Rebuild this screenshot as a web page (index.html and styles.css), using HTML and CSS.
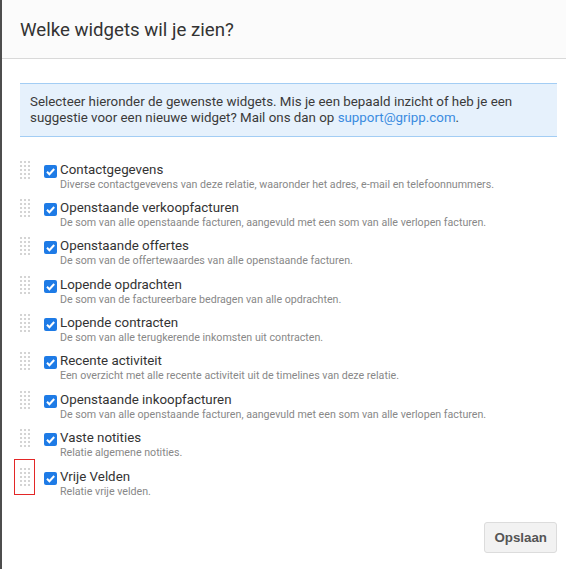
FILE: index.html
```html
<!DOCTYPE html>
<html lang="nl">
<head>
<meta charset="utf-8">
<link rel="stylesheet" href="styles.css">
</head>
<body>
<div class="dialog">
  <div class="header"><h1 class="title">Welke widgets wil je zien?</h1></div>
  <div class="info">Selecteer hieronder de gewenste widgets. Mis je een bepaald inzicht of heb je een suggestie voor een nieuwe widget? Mail ons dan op <a class="link" href="#">support@gripp.com</a>.</div>
  <ul class="list">
    <li class="row"><span class="handle"><i></i><i></i><i></i><i></i><i></i><i></i><i></i><i></i><i></i><i></i><i></i><i></i><i></i><i></i><i></i></span><span class="cb"><svg viewBox="0 0 13 13" width="13" height="13"><path d="M3 6.8 L5.4 9.2 L10.2 4" fill="none" stroke="#fff" stroke-width="2"/></svg></span><div class="text"><div class="name">Contactgegevens</div><div class="desc">Diverse contactgevevens van deze relatie, waaronder het adres, e-mail en telefoonnummers.</div></div></li>
    <li class="row"><span class="handle"><i></i><i></i><i></i><i></i><i></i><i></i><i></i><i></i><i></i><i></i><i></i><i></i><i></i><i></i><i></i></span><span class="cb"><svg viewBox="0 0 13 13" width="13" height="13"><path d="M3 6.8 L5.4 9.2 L10.2 4" fill="none" stroke="#fff" stroke-width="2"/></svg></span><div class="text"><div class="name">Openstaande verkoopfacturen</div><div class="desc">De som van alle openstaande facturen, aangevuld met een som van alle verlopen facturen.</div></div></li>
    <li class="row"><span class="handle"><i></i><i></i><i></i><i></i><i></i><i></i><i></i><i></i><i></i><i></i><i></i><i></i><i></i><i></i><i></i></span><span class="cb"><svg viewBox="0 0 13 13" width="13" height="13"><path d="M3 6.8 L5.4 9.2 L10.2 4" fill="none" stroke="#fff" stroke-width="2"/></svg></span><div class="text"><div class="name">Openstaande offertes</div><div class="desc">De som van de offertewaardes van alle openstaande facturen.</div></div></li>
    <li class="row"><span class="handle"><i></i><i></i><i></i><i></i><i></i><i></i><i></i><i></i><i></i><i></i><i></i><i></i><i></i><i></i><i></i></span><span class="cb"><svg viewBox="0 0 13 13" width="13" height="13"><path d="M3 6.8 L5.4 9.2 L10.2 4" fill="none" stroke="#fff" stroke-width="2"/></svg></span><div class="text"><div class="name">Lopende opdrachten</div><div class="desc">De som van de factureerbare bedragen van alle opdrachten.</div></div></li>
    <li class="row"><span class="handle"><i></i><i></i><i></i><i></i><i></i><i></i><i></i><i></i><i></i><i></i><i></i><i></i><i></i><i></i><i></i></span><span class="cb"><svg viewBox="0 0 13 13" width="13" height="13"><path d="M3 6.8 L5.4 9.2 L10.2 4" fill="none" stroke="#fff" stroke-width="2"/></svg></span><div class="text"><div class="name">Lopende contracten</div><div class="desc">De som van alle terugkerende inkomsten uit contracten.</div></div></li>
    <li class="row"><span class="handle"><i></i><i></i><i></i><i></i><i></i><i></i><i></i><i></i><i></i><i></i><i></i><i></i><i></i><i></i><i></i></span><span class="cb"><svg viewBox="0 0 13 13" width="13" height="13"><path d="M3 6.8 L5.4 9.2 L10.2 4" fill="none" stroke="#fff" stroke-width="2"/></svg></span><div class="text"><div class="name">Recente activiteit</div><div class="desc">Een overzicht met alle recente activiteit uit de timelines van deze relatie.</div></div></li>
    <li class="row"><span class="handle"><i></i><i></i><i></i><i></i><i></i><i></i><i></i><i></i><i></i><i></i><i></i><i></i><i></i><i></i><i></i></span><span class="cb"><svg viewBox="0 0 13 13" width="13" height="13"><path d="M3 6.8 L5.4 9.2 L10.2 4" fill="none" stroke="#fff" stroke-width="2"/></svg></span><div class="text"><div class="name">Openstaande inkoopfacturen</div><div class="desc">De som van alle openstaande facturen, aangevuld met een som van alle verlopen facturen.</div></div></li>
    <li class="row"><span class="handle"><i></i><i></i><i></i><i></i><i></i><i></i><i></i><i></i><i></i><i></i><i></i><i></i><i></i><i></i><i></i></span><span class="cb"><svg viewBox="0 0 13 13" width="13" height="13"><path d="M3 6.8 L5.4 9.2 L10.2 4" fill="none" stroke="#fff" stroke-width="2"/></svg></span><div class="text"><div class="name">Vaste notities</div><div class="desc">Relatie algemene notities.</div></div></li>
    <li class="row"><span class="handle focused"><i></i><i></i><i></i><i></i><i></i><i></i><i></i><i></i><i></i><i></i><i></i><i></i><i></i><i></i><i></i></span><span class="cb"><svg viewBox="0 0 13 13" width="13" height="13"><path d="M3 6.8 L5.4 9.2 L10.2 4" fill="none" stroke="#fff" stroke-width="2"/></svg></span><div class="text"><div class="name">Vrije Velden</div><div class="desc">Relatie vrije velden.</div></div></li>
  </ul>
  <div class="footer"><button class="btn">Opslaan</button></div>
</div>
</body>
</html>
```
FILE: styles.css
```css
html, body { margin: 0; padding: 0; background: #fff; }
body { font-family: Roboto, "Noto Sans", sans-serif; color: #333; }
.dialog { border-left: 2px solid #4d4d4d; min-height: 569px; box-sizing: border-box; }
.header { height: 58px; background: #fbfbfb; border-bottom: 1px solid #d9d9d9; display: flex; align-items: center; padding-left: 18px; }
.title { margin: 0; font-size: 18.67px; font-weight: 400; color: #333; padding-top: 1px; }
.info { margin: 24px 9px 0 18px; background: #e6f1fc; border-top: 1px solid #a3cdf4; border-bottom: 1px solid #a3cdf4; padding: 10px 10px 10px 10px; font-size: 13.33px; line-height: 16px; color: #3a3a3a; }
.link { color: #3a8be0; text-decoration: none; }
.list { list-style: none; margin: 20.5px 0 0 0; padding: 0 0 0 18px; }
.row { display: flex; align-items: flex-start; height: 38.4px; box-sizing: border-box; padding-top: 4px; }
.handle { display: grid; grid-template-columns: repeat(3, 2px); grid-auto-rows: 2px; gap: 2px; margin-top: -1px; width: 10px; position: relative; }
.handle i { background: #d4d4d4; display: block; }
.handle.focused::after { content: ""; position: absolute; left: -6px; top: -9px; width: 19px; height: 34px; border: 1px solid #e32727; }
.cb { width: 13px; height: 13px; border-radius: 2px; background: #1e7be6; margin-left: 14px; margin-top: 3px; display: block; }
.cb svg { display: block; }
.text { margin-left: 3px; }
.name { font-size: 13.33px; line-height: 16px; color: #333; }
.desc { font-size: 10.67px; line-height: 14px; color: #888; }
.footer { display: flex; justify-content: flex-end; padding: 19px 9px 0 0; }
.btn { font-family: "Liberation Sans", Arial, sans-serif; font-weight: 700; font-size: 13.33px; color: #555; background: #f2f2f2; border: 1px solid #dcdcdc; border-radius: 3px; height: 31px; padding: 0 9px; }
```
